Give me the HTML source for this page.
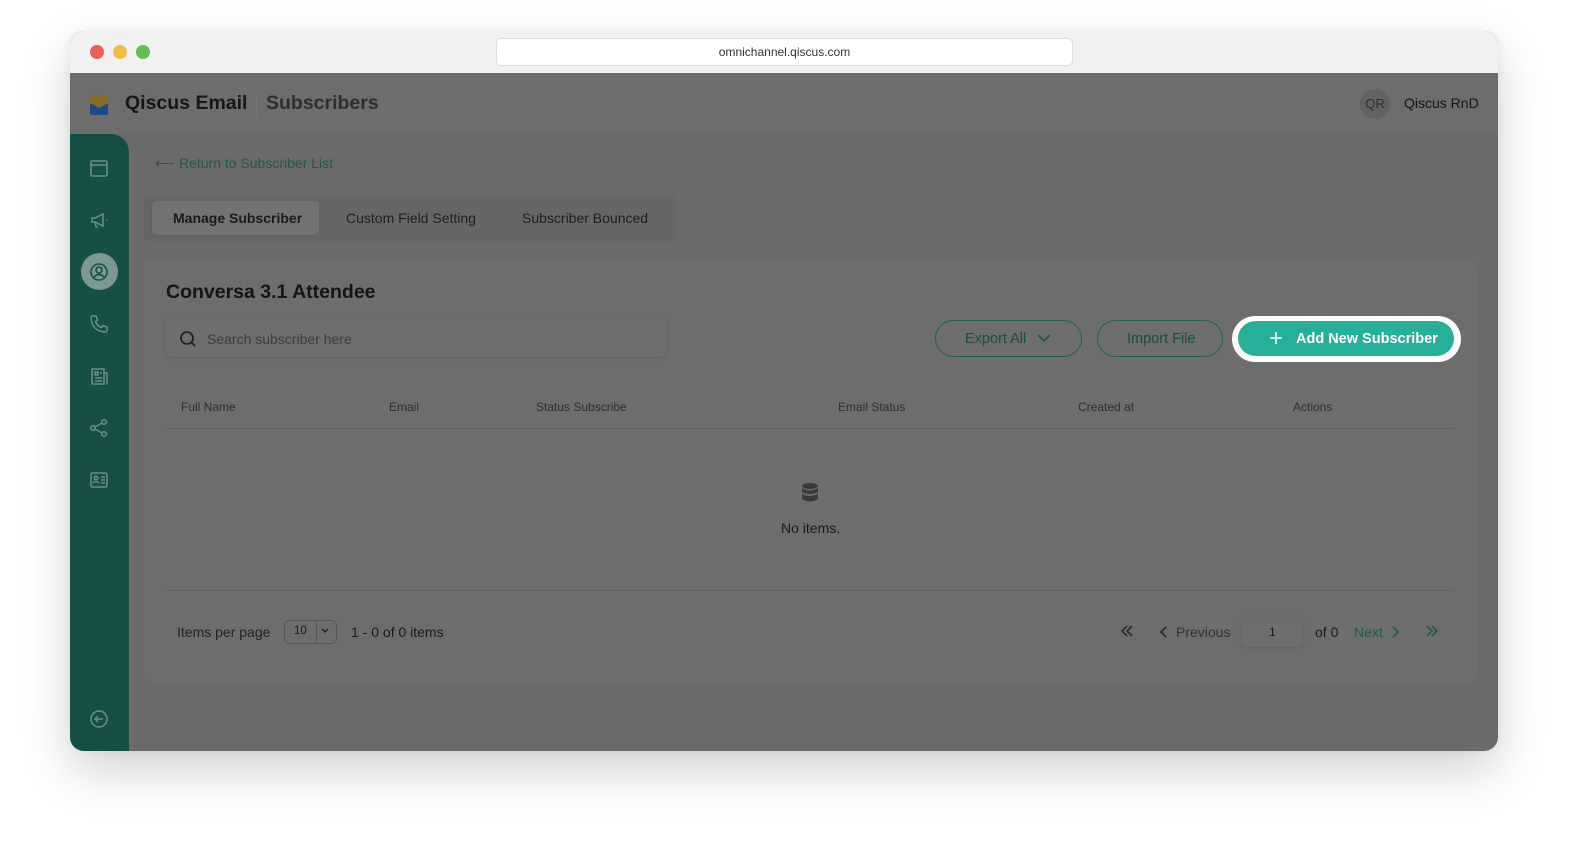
<!DOCTYPE html>
<html><head><meta charset="utf-8"><style>
*{box-sizing:border-box;margin:0;padding:0}
body{width:1580px;height:866px;background:#fff;font-family:"Liberation Sans",sans-serif;position:relative;overflow:hidden}
.win{position:absolute;left:70px;top:31px;width:1428px;height:720px;border-radius:14px;overflow:hidden;box-shadow:0 20px 50px rgba(0,0,0,.18),0 0 8px rgba(0,0,0,.06);background:#6a6a6a}
.tb{position:absolute;left:0;top:0;width:100%;height:42px;background:#f1f1f1}
.dot{position:absolute;top:14px;width:14px;height:14px;border-radius:50%}
.url{position:absolute;left:426px;top:7px;width:577px;height:28px;background:#fff;border:1px solid #ddd;border-radius:5px;text-align:center;font-size:12px;line-height:26px;color:#333}
.hdr{position:absolute;left:0;top:42px;width:100%;height:61px;background:#6d6d6d}
.side{position:absolute;left:0;top:103px;width:59px;height:617px;background:#154f45;border-radius:0 18px 0 0}
.ic{position:absolute;left:19px;width:20px;height:20px}
.abs{position:absolute}
.t{position:absolute;white-space:nowrap}
</style></head><body>
<div class="win">
<div class="tb">
<div class="dot" style="left:20px;background:#ec5f57"></div>
<div class="dot" style="left:43px;background:#f2bc41"></div>
<div class="dot" style="left:66px;background:#5fc24f"></div>
<div class="url">omnichannel.qiscus.com</div>
</div>
<div class="hdr">
<svg class="abs" style="left:19px;top:21px" width="20" height="22" viewBox="0 0 20 22"><path d="M1 3 Q1 1 3 1 H17 Q19 1 19 3 V9 L10 14 L1 9Z" fill="#8a6a24"/><path d="M1 9 L10 14 L19 9 V19 Q19 21 17 21 H3 Q1 21 1 19Z" fill="#1a4b8a"/></svg>
<div class="t" style="left:55px;top:19px;font-size:19.5px;font-weight:bold;color:#161616">Qiscus Email</div>
<div class="abs" style="left:186px;top:20px;width:1px;height:24px;background:#777"></div>
<div class="t" style="left:196px;top:19px;font-size:19.5px;font-weight:bold;color:#2e2e2e">Subscribers</div>
<div class="abs" style="left:1290px;top:16px;width:30px;height:30px;border-radius:50%;background:#626262;color:#2c2c2c;font-size:13px;text-align:center;line-height:30px">QR</div>
<div class="t" style="left:1334px;top:22px;font-size:14px;color:#151515">Qiscus RnD</div>
</div>
<div class="side">
<svg class="ic" style="top:24px" viewBox="0 0 20 20" fill="none" stroke="#6b8f88" stroke-width="1.5"><rect x="2" y="3" width="16" height="15" rx="1.5"/><path d="M2 7H18"/></svg>
<svg class="ic" style="top:76px" viewBox="0 0 20 20" fill="none" stroke="#6b8f88" stroke-width="1.5"><path d="M3 8V12H6L14 16V4L6 8Z M6 12L7 17H9"/><path d="M17 10H18"/></svg>
<div class="abs" style="left:11px;top:119px;width:37px;height:37px;border-radius:50%;background:#7d9893"></div>
<svg class="ic" style="top:128px" viewBox="0 0 20 20" fill="none" stroke="#154f45" stroke-width="1.6"><circle cx="10" cy="10" r="8"/><circle cx="10" cy="8" r="3"/><path d="M5 15Q10 10 15 15"/></svg>
<svg class="ic" style="top:180px" viewBox="0 0 20 20" fill="none" stroke="#6b8f88" stroke-width="1.5"><path d="M4 2L7 2L8.5 6L6.5 7.5Q8 12 12.5 13.5L14 11.5L18 13V16Q18 18 16 18Q3 17 2 4Q2 2 4 2Z"/></svg>
<svg class="ic" style="top:232px" viewBox="0 0 20 20" fill="none" stroke="#6b8f88" stroke-width="1.5"><path d="M3 3H15V18H4Q3 18 3 17Z M15 7H18V17Q18 18 16.5 18"/><path d="M6 6H9V9H6Z M11 7H13 M6 12H13 M6 15H13"/></svg>
<svg class="ic" style="top:284px" viewBox="0 0 20 20" fill="none" stroke="#6b8f88" stroke-width="1.5"><circle cx="4" cy="10" r="2.3"/><circle cx="15" cy="4" r="2.3"/><circle cx="15" cy="16" r="2.3"/><path d="M6 9L13 5 M6 11L13 15"/></svg>
<svg class="ic" style="top:336px" viewBox="0 0 20 20" fill="none" stroke="#6b8f88" stroke-width="1.5"><rect x="2" y="3" width="16" height="14" rx="1.5"/><circle cx="7" cy="8" r="1.8"/><path d="M4 13Q7 10 10 13 M12 7H16 M12 10H16 M12 13H16"/></svg>
<svg class="ic" style="top:575px" viewBox="0 0 20 20" fill="none" stroke="#6b8f88" stroke-width="1.5"><circle cx="10" cy="10" r="8"/><path d="M14 10H6 M9 7L6 10L9 13"/></svg>
</div>
<div class="t" style="left:85px;top:124px;font-size:14px;color:#1d5a4e">⟵ Return to Subscriber List</div>
<div class="abs" style="left:74px;top:163px;width:532px;height:48px;background:#666;border-radius:6px"></div>
<div class="abs" style="left:82px;top:170px;width:167px;height:34px;background:#727272;border-radius:5px;box-shadow:0 1px 3px rgba(0,0,0,.1)"></div>
<div class="t" style="left:103px;top:179px;font-size:14px;font-weight:bold;color:#1a1a1a">Manage Subscriber</div>
<div class="t" style="left:276px;top:179px;font-size:14px;color:#1f1f1f">Custom Field Setting</div>
<div class="t" style="left:452px;top:179px;font-size:14px;color:#1f1f1f">Subscriber Bounced</div>
<div class="abs" style="left:74px;top:227px;width:1334px;height:424px;background:#6d6d6d;border-radius:10px"></div>
<div class="t" style="left:96px;top:250px;font-size:19.5px;font-weight:bold;color:#151515">Conversa 3.1 Attendee</div>
<div class="abs" style="left:96px;top:288px;width:500px;height:38px;background:#6e6e6e;border-radius:6px;box-shadow:0 1px 4px rgba(0,0,0,.12)"></div>
<svg class="abs" style="left:109px;top:299px" width="18" height="18" viewBox="0 0 18 18" fill="none" stroke="#1a1a1a" stroke-width="1.6"><circle cx="8" cy="8" r="6"/><path d="M12.5 12.5L16 16"/></svg>
<div class="t" style="left:137px;top:300px;font-size:14px;color:#3c3c3c">Search subscriber here</div>
<div class="abs" style="left:865px;top:289px;width:147px;height:37px;border:1.5px solid #1f5f53;border-radius:19px"></div>
<div class="t" style="left:895px;top:300px;font-size:14.5px;color:#1a4d44">Export All</div>
<svg class="abs" style="left:967px;top:302px" width="14" height="10" viewBox="0 0 14 10" fill="none" stroke="#1a4d44" stroke-width="1.5"><path d="M1 2L7 8L13 2"/></svg>
<div class="abs" style="left:1027px;top:289px;width:126px;height:37px;border:1.5px solid #1f5f53;border-radius:19px"></div>
<div class="t" style="left:1057px;top:300px;font-size:14.5px;color:#1a4d44">Import File</div>
<div class="abs" style="left:1162px;top:285px;width:229px;height:46px;background:#fff;border-radius:23px"></div>
<div class="abs" style="left:1168px;top:290px;width:216px;height:35px;background:#27b098;border-radius:18px"></div>
<svg class="abs" style="left:1199px;top:300px" width="14" height="14" viewBox="0 0 14 14" stroke="#fff" stroke-width="1.5"><path d="M7 1V13M1 7H13"/></svg>
<div class="t" style="left:1226px;top:300px;font-size:14.5px;font-weight:bold;color:#fff">Add New Subscriber</div>
<div class="t" style="left:111px;top:369px;font-size:12px;color:#2f2f2f">Full Name</div>
<div class="t" style="left:319px;top:369px;font-size:12px;color:#2f2f2f">Email</div>
<div class="t" style="left:466px;top:369px;font-size:12px;color:#2f2f2f">Status Subscribe</div>
<div class="t" style="left:768px;top:369px;font-size:12px;color:#2f2f2f">Email Status</div>
<div class="t" style="left:1008px;top:369px;font-size:12px;color:#2f2f2f">Created at</div>
<div class="t" style="left:1223px;top:369px;font-size:12px;color:#2f2f2f">Actions</div>
<div class="abs" style="left:96px;top:397px;width:1288px;height:1px;background:#5f5f5f"></div>
<svg class="abs" style="left:730px;top:451px" width="20" height="22" viewBox="0 0 20 22" fill="#3a3a3a"><ellipse cx="10" cy="4" rx="8" ry="3"/><path d="M2 6Q10 11 18 6V10Q10 14 2 10Z M2 12Q10 16 18 12V17Q10 22 2 17Z"/></svg>
<div class="t" style="left:711px;top:489px;font-size:14px;color:#1a1a1a">No items.</div>
<div class="abs" style="left:96px;top:559px;width:1288px;height:1px;background:#636363"></div>
<div class="t" style="left:107px;top:593px;font-size:14px;color:#222">Items per page</div>
<div class="abs" style="left:214px;top:589px;width:53px;height:24px;border:1px solid #555;border-radius:5px"></div>
<div class="abs" style="left:246px;top:590px;width:1px;height:22px;background:#555"></div>
<div class="t" style="left:224px;top:594px;font-size:11.5px;color:#1a1a1a">10</div>
<svg class="abs" style="left:250px;top:596px" width="10" height="7" viewBox="0 0 10 7" fill="none" stroke="#1a1a1a" stroke-width="1.3"><path d="M2 2L5 5L8 2"/></svg>
<div class="t" style="left:281px;top:593px;font-size:14px;color:#1a1a1a">1 - 0 of 0 items</div>
<svg class="abs" style="left:1050px;top:594px" width="14" height="12" viewBox="0 0 14 12" fill="none" stroke="#2a2a2a" stroke-width="1.6"><path d="M7 1L2 6L7 11M12 1L7 6L12 11"/></svg>
<svg class="abs" style="left:1090px;top:595px" width="8" height="12" viewBox="0 0 8 12" fill="none" stroke="#2a2a2a" stroke-width="1.6"><path d="M6 1L1 6L6 11"/></svg>
<div class="t" style="left:1106px;top:593px;font-size:14px;color:#333">Previous</div>
<div class="abs" style="left:1172px;top:586px;width:60px;height:30px;border-radius:6px;background:#6d6d6d;box-shadow:0 1px 4px rgba(0,0,0,.12)"></div>
<div class="t" style="left:1199px;top:594px;font-size:12px;color:#1a1a1a">1</div>
<div class="t" style="left:1245px;top:593px;font-size:14px;color:#1a1a1a">of 0</div>
<div class="t" style="left:1284px;top:593px;font-size:14px;color:#1d5a4e">Next</div>
<svg class="abs" style="left:1321px;top:595px" width="8" height="12" viewBox="0 0 8 12" fill="none" stroke="#1d5a4e" stroke-width="1.6"><path d="M2 1L7 6L2 11"/></svg>
<svg class="abs" style="left:1355px;top:594px" width="14" height="12" viewBox="0 0 14 12" fill="none" stroke="#1d5a4e" stroke-width="1.6"><path d="M2 1L7 6L2 11M7 1L12 6L7 11"/></svg>
</div>
</body></html>
